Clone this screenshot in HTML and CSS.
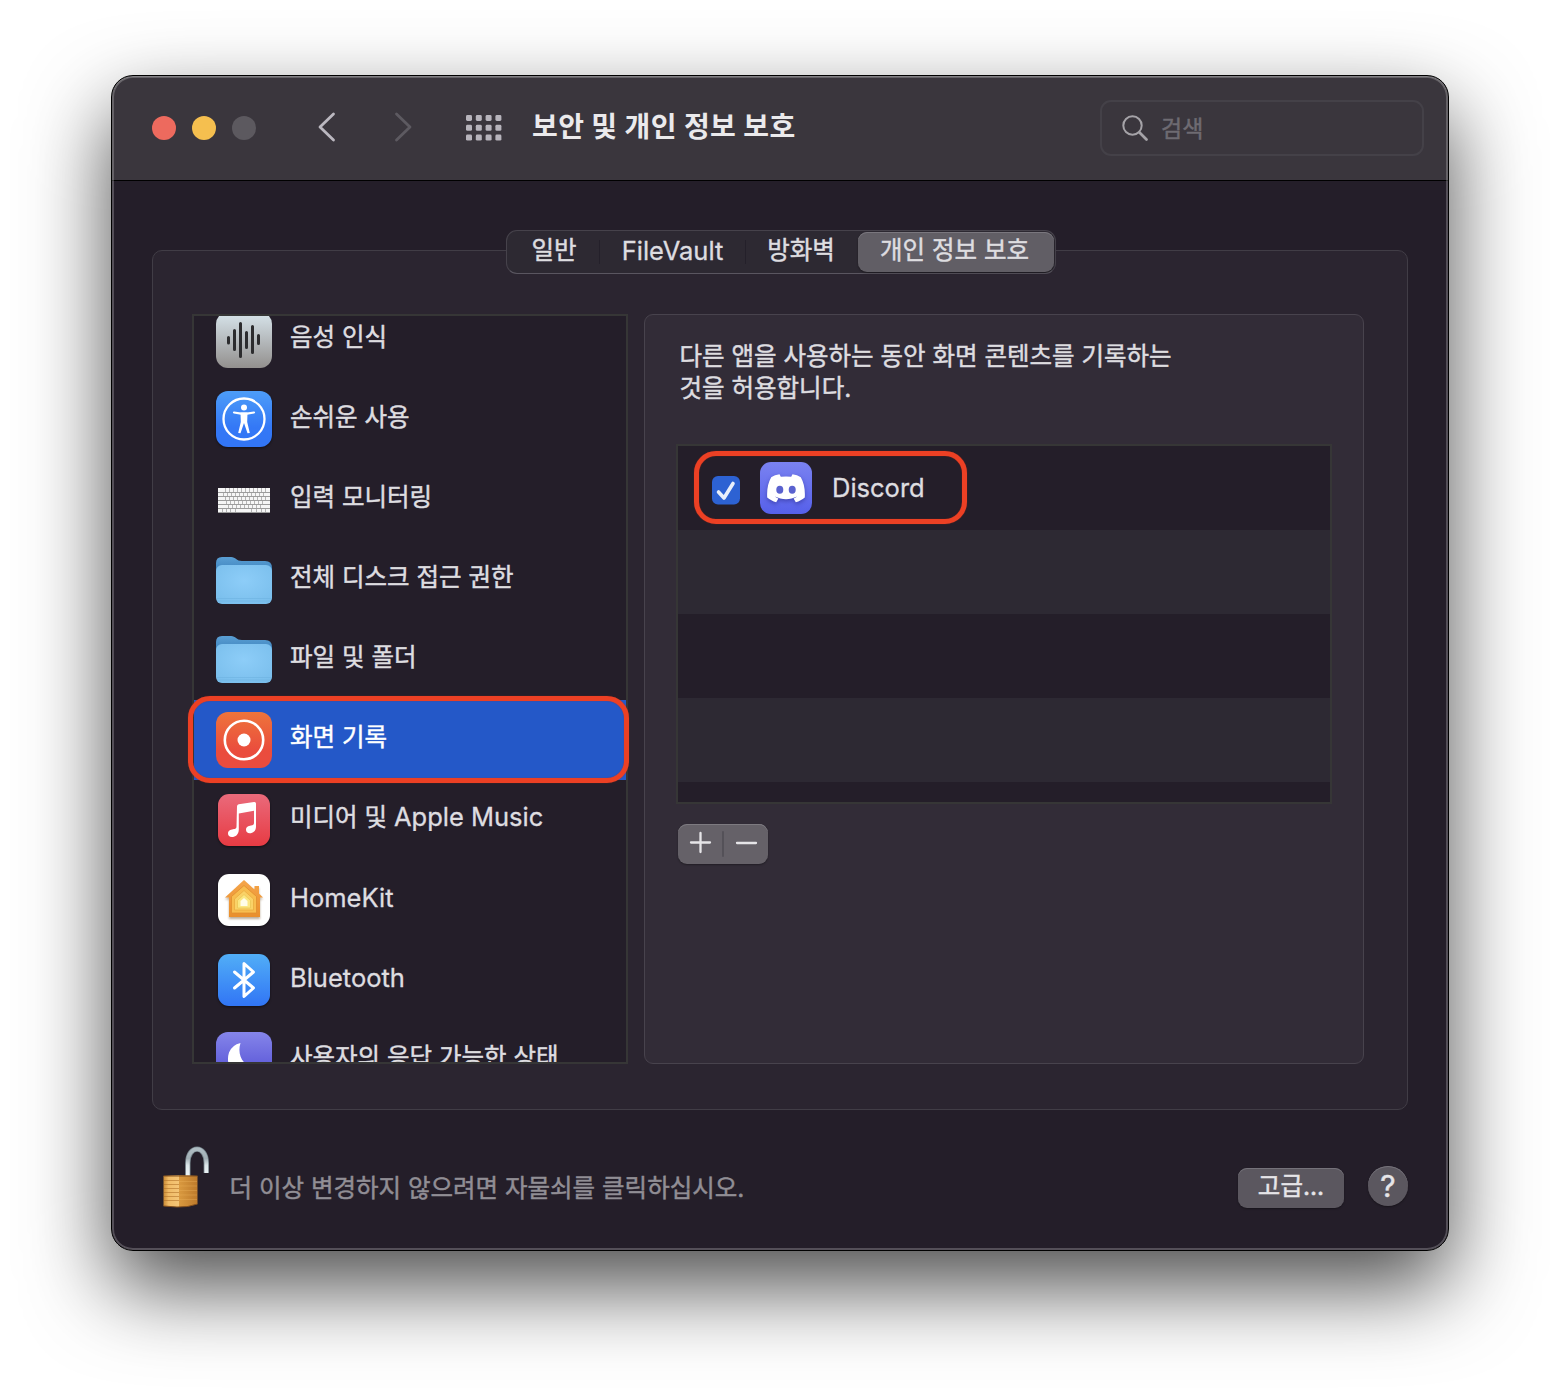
FILE: index.html
```html
<!DOCTYPE html>
<html lang="ko">
<head>
<meta charset="utf-8">
<title>보안 및 개인 정보 보호</title>
<link rel="stylesheet" href="styles.css">
</head>
<body>
<svg class="defs" width="0" height="0" aria-hidden="true">
  <defs>
    <linearGradient id="gray" x2="0" y2="1"><stop stop-color="#d8e5ec"/><stop offset="1" stop-color="#93908e"/></linearGradient>
    <linearGradient id="blue" x2="0" y2="1"><stop stop-color="#4d9df8"/><stop offset=".65" stop-color="#3478f6"/><stop offset="1" stop-color="#3275f5"/></linearGradient>
    <linearGradient id="bt" x2="0" y2="1"><stop stop-color="#51aef7"/><stop offset="1" stop-color="#3175f5"/></linearGradient>
    <linearGradient id="orange" x2="0" y2="1"><stop stop-color="#ee743b"/><stop offset=".7" stop-color="#ea4c3d"/><stop offset="1" stop-color="#ea4c3f"/></linearGradient>
    <linearGradient id="pink" x2="0" y2="1"><stop stop-color="#ea6a7b"/><stop offset="1" stop-color="#e73b43"/></linearGradient>
    <linearGradient id="purple" x2="0" y2="1"><stop stop-color="#8585ea"/><stop offset="1" stop-color="#4a45cf"/></linearGradient>
    <linearGradient id="discord" x2="0" y2="1"><stop stop-color="#7a82f1"/><stop offset="1" stop-color="#5660ea"/></linearGradient>
    <linearGradient id="back" x2="0" y2="1"><stop stop-color="#5a9fd4"/><stop offset=".4" stop-color="#4489c2"/></linearGradient>
    <radialGradient id="front" cy=".4" r=".75"><stop stop-color="#8dcdf8"/><stop offset="1" stop-color="#78bdeb"/></radialGradient>
    <linearGradient id="house" x2="0" y2="1"><stop stop-color="#f5a54a"/><stop offset="1" stop-color="#e98f2c"/></linearGradient>
    <linearGradient id="brass"><stop stop-color="#c98a35"/><stop offset=".15" stop-color="#f0bb66"/><stop offset=".45" stop-color="#f4c577"/><stop offset=".46" stop-color="#d9993f"/><stop offset="1" stop-color="#bd7a2b"/></linearGradient>
    <linearGradient id="steel" x2="0" y2="1"><stop stop-color="#aebcc2"/><stop offset=".35" stop-color="#a3b0b6"/><stop offset=".6" stop-color="#dde7ea"/><stop offset="1" stop-color="#eef5f7"/></linearGradient>
    <symbol id="folder" viewBox="0 0 56 48">
      <path d="M0 7Q0 1 6 1H15C20 1 20 5 26 5H49Q56 5 56 12V30H0Z" fill="url(#back)"/>
      <rect y="9" width="56" height="39" rx="6" fill="url(#front)"/>
      <path d="M1 42.5H55M1 45H55" stroke="#70b4e2" stroke-width=".7"/>
    </symbol>
  </defs>
</svg>
<main class="window">
  <header class="toolbar">
    <div class="lights"><i class="light close"></i><i class="light minimize"></i><i class="light disabled"></i></div>
    <svg class="back" width="20" height="32" viewBox="0 0 20 32"><path d="M16.5 3L3 16L16.5 29" class="chevron"/></svg>
    <svg class="forward" width="20" height="32" viewBox="0 0 20 32"><path d="M3.5 3L17 16L3.5 29" class="chevron dim"/></svg>
    <svg class="apps" width="36" height="26" viewBox="0 0 36 26" fill="#b7b4bc">
      <g id="dots"><rect width="6" height="6" rx="1.4"/><rect x="9.8" width="6" height="6" rx="1.4"/><rect x="19.6" width="6" height="6" rx="1.4"/><rect x="29.4" width="6" height="6" rx="1.4"/></g>
      <use href="#dots" y="9.8"/><use href="#dots" y="19.6"/>
    </svg>
    <h1 class="title">보안 및 개인 정보 보호</h1>
    <div class="search">
      <svg width="28" height="28" viewBox="0 0 28 28" fill="none" stroke="#a5a3a8"><circle cx="11.5" cy="11.5" r="9.2" stroke-width="2"/><path d="M18.5 18.5L25.5 25.5" stroke-width="2.8" stroke-linecap="round"/></svg>
      <span>검색</span>
    </div>
  </header>

  <nav class="tabs">
    <span class="tab general">일반</span><i class="divider"></i>
    <span class="tab vault latin">FileVault</span><i class="divider"></i>
    <span class="tab firewall">방화벽</span>
    <span class="tab active">개인 정보 보호</span>
  </nav>

  <section class="group">
    <div class="sidebar">
      <ul class="list">
        <li class="item"><svg class="icon" viewBox="0 0 56 56"><rect width="56" height="56" rx="12" fill="url(#gray)"/><path d="M12.5 25.500V31M18.500 18.500V37.500M24.500 11.500V44.500M30.500 20.500V35.500M36.500 14.500V40.500M42.500 23.500V31.500" stroke="#2c2c2e" stroke-width="3" stroke-linecap="round"/></svg><span>음성 인식</span></li>
        <li class="item"><svg class="icon raised lifted" viewBox="0 0 56 56"><rect width="56" height="56" rx="12" fill="url(#blue)"/><circle cx="28" cy="28" r="20.500" fill="none" stroke="#fff" stroke-width="2.300"/><circle cx="28" cy="16.500" r="3"/><path d="M18 21.500L25 22.600H31L38 21.500" class="limb"/><path d="M24.500 21.500H31.500L31.200 31L33.800 42L31.500 42.300L28 32L24.500 42.300L22.200 42L24.800 31Z" fill="#fff"/></svg><span>손쉬운 사용</span></li>
        <li class="item"><svg class="icon" viewBox="0 0 56 56"><path d="M2 16H54V41H2Z" fill="#f6f6f6"/><path d="M2 20.500H54M2 24.500H54M2 28.500H54M2 32.500H54M2 36.500H54M2 40.500H54" stroke="#9c9c9c"/><path d="M9.500 16V20M13.500 16V20M17.500 16V20M21.500 16V20M25.500 16V20M29.500 16V20M33.500 16V20M37.500 16V20M41.500 16V20M45.500 16V20M49.500 16V20M7.500 21V24M11.500 21V24M15.500 21V24M19.500 21V24M23.500 21V24M27.500 21V24M31.500 21V24M35.500 21V24M39.500 21V24M43.500 21V24M47.500 21V24M9.500 25V28M13.500 25V28M17.500 25V28M21.500 25V28M25.500 25V28M29.500 25V28M33.500 25V28M37.500 25V28M41.500 25V28M45.500 25V28M49.500 25V28M10.500 29V32M14.500 29V32M18.500 29V32M22.500 29V32M26.500 29V32M30.500 29V32M34.500 29V32M38.500 29V32M42.500 29V32M46.500 29V32M12.500 33V36M16.500 33V36M20.500 33V36M24.500 33V36M28.500 33V36M32.500 33V36M36.500 33V36M40.500 33V36M44.500 33V36M6.500 37V40M10.500 37V40M14.500 37V40M19.500 37V40M35.500 37V40M40.500 37V40M45.500 37V40M49.500 37V40" stroke="#b4b4b4"/></svg><span>입력 모니터링</span></li>
        <li class="item"><svg class="icon folder" viewBox="0 0 56 48"><use href="#folder"/></svg><span>전체 디스크 접근 권한</span></li>
        <li class="item"><svg class="icon folder lifted" viewBox="0 0 56 48"><use href="#folder"/></svg><span>파일 및 폴더</span></li>
        <li class="item selected"><svg class="icon" viewBox="0 0 56 56"><rect width="56" height="56" rx="12" fill="url(#orange)"/><circle cx="28" cy="28" r="19.200" fill="none" stroke="#fff" stroke-width="2.600"/><circle cx="28" cy="28" r="6.500"/></svg><span>화면 기록</span></li>
        <li class="item"><svg class="icon raised" viewBox="0 0 56 56"><rect x="2" y="2" width="52" height="52" rx="11" fill="url(#pink)"/><path d="M21 14.500Q21 12.700 22.700 12.300L38 10Q40 9.700 40 11.500V34.500C40 39 37 41.300 33.700 41.300C31.500 41.300 30 39.700 30 37.700C30 34.900 32.300 34 35 33.500C37 33.200 38 32.700 38 30.800V18.800L22.800 21.500V37.500C22.800 42.500 19.500 45 15.800 45C13.500 45 12 43.500 12 41.500C12 38.800 14.300 37.800 17 37.300C20 36.800 20.500 36.300 20.500 34Z" fill="#fff"/></svg><span>미디어 및 <b class="latin">Apple Music</b></span></li>
        <li class="item"><svg class="icon raised" viewBox="0 0 56 56"><rect x="2" y="2" width="52" height="52" rx="11" fill="#fff"/><path class="house-shadow" d="M28 8L38.500 17.500V14H43V21.500L47 25.500H44V45H13V25.500H9Z" fill="url(#house)"/><path d="M28 13.500L40.500 24.500V41H15.500V24.500Z" fill="#f8bd4f" stroke="#e08e2d" stroke-width=".8"/><path d="M28 18.500L37.500 27V38H18.500V27Z" fill="#fad267" stroke="#e9ac40" stroke-width=".8"/><path d="M28 22.500L34.500 28.500V36H21.500V28.500Z" fill="#fbe783" stroke="#ebc655" stroke-width=".8"/><path d="M28 26L31.500 29V34H24.500V29Z" fill="#fffde8"/></svg><span class="latin">HomeKit</span></li>
        <li class="item"><svg class="icon raised" viewBox="0 0 56 56"><rect x="2" y="2" width="52" height="52" rx="11" fill="url(#bt)"/><path d="M18.500 20L37.500 36L28 44.500V11.500L37.500 20L18.500 36" fill="none" stroke="#fff" stroke-width="3" stroke-linecap="round" stroke-linejoin="round"/></svg><span class="latin">Bluetooth</span></li>
        <li class="item"><svg class="icon" viewBox="0 0 56 56"><rect width="56" height="56" rx="12" fill="url(#purple)"/><path d="M24.500 11Q16 13 13 20.500C9 33 17 43 28 43C34 43 40 40 43 34C30 38 20 25 24.500 11Z" fill="#fff"/></svg><span>사용자의 응답 가능한 상태</span></li>
      </ul>
      <i class="mark mark-row"></i>
    </div>

    <div class="panel">
      <p class="description">다른 앱을 사용하는 동안 화면 콘텐츠를 기록하는<br>것을 허용합니다.</p>
      <div class="table">
        <div class="app">
          <svg class="check" width="28" height="29" viewBox="0 0 28 29"><rect width="28" height="28.500" rx="6" fill="#2d62d3"/><path d="M6.500 16L12 22L21 7.500" fill="none" stroke="#e9effb" stroke-width="3.600" stroke-linecap="round" stroke-linejoin="round"/></svg>
          <svg class="app-icon" width="52" height="52" viewBox="0 0 52 52"><rect width="52" height="52" rx="11" fill="url(#discord)"/><path class="face" d="M19.500 12.300C16.500 12.800 13.500 13.700 11.200 15.300C8.100 20.500 6.700 27.500 7.200 35.500C9.800 37.800 12.800 39.300 16.200 40.200L18.400 36.600C16.800 36 15.800 35.400 14.800 34.600C22 38 30 38 37.200 34.600C36.200 35.400 35.200 36 33.600 36.600L35.800 40.200C39.200 39.300 42.200 37.800 44.800 35.500C45.300 27.500 43.900 20.500 40.800 15.300C38.500 13.700 35.500 12.800 32.500 12.300L31.200 14.800Q26 14 20.800 14.800Z" fill="#fff"/><ellipse cx="19.800" cy="27.700" rx="3.500" ry="4" fill="#5a62cf"/><ellipse cx="32.200" cy="27.700" rx="3.500" ry="4" fill="#5a62cf"/></svg>
          <span class="app-name latin">Discord</span>
          <i class="mark mark-app"></i>
        </div>
      </div>
      <div class="stepper">
        <svg width="90" height="40" viewBox="0 0 90 40" fill="none" stroke="#e6e5e8" stroke-width="2.300" stroke-linecap="round"><path d="M13 18.500H32M22.500 9V28M59 19H78"/><path d="M45 8V32" stroke="#545158" stroke-width="2"/></svg>
      </div>
    </div>
  </section>

  <footer class="footer">
    <svg class="lock" width="48" height="62" viewBox="0 0 48 62">
      <path d="M24.800 30V17C24.800 -1.500 43.300 -1.500 43.300 17V27" fill="none" stroke="#75838a" stroke-width="5.400"/>
      <path d="M24.800 30V17C24.800 -1.500 43.300 -1.500 43.300 17V27" fill="none" stroke="url(#steel)" stroke-width="3.800"/>
      <path d="M.5 30Q18 28.500 34.500 30V58Q25 61.500 14 61L.5 60Z" fill="url(#brass)"/>
      <path d="M1 34.500H16M1 38.500H16M1 42.500H16M1 46.500H16M1 50.500H16M1 54.500H16" stroke="#ad6c24" stroke-width="1.200" opacity=".55"/>
      <path d="M16 35.500H34M16 40H34M16 44.500H34M16 49H34M16 53.500H34" stroke="#eeb45d" opacity=".35"/>
      <path d="M.5 30H34.500M.5 60L14 61Q25 61.500 34.500 58" stroke="#84501d" fill="none"/>
    </svg>
    <span class="hint">더 이상 변경하지 않으려면 자물쇠를 클릭하십시오.</span>
    <span class="advanced">고급...</span>
    <span class="help">?</span>
  </footer>
</main>
</body>
</html>
```
FILE: styles.css
```css
* { box-sizing: border-box; }

body {
  margin: 0;
  width: 1560px;
  height: 1398px;
  padding: 75px 111px;
  overflow: hidden;
  background: #fff;
  color: #dedde0;
  font: 24.5px/32px Inter, "Noto Sans CJK KR", sans-serif;
  -webkit-text-stroke: .45px;
  white-space: nowrap;
}

.defs { position: absolute; }
svg { display: block; flex: none; }

/* Latin labels are set slightly larger than the Hangul ones */
.latin { font-size: 25.5px; font-weight: 400; -webkit-text-stroke-width: .3px; }

.window {
  display: flex;
  flex-direction: column;
  width: 1338px;
  height: 1176px;
  border: 1px solid #000;
  border-radius: 22px;
  background: linear-gradient(#3a363d 0 104px, #000 104px 105px, #241e29 105px);
  box-shadow:
    inset 0 1px rgba(255, 255, 255, .2),
    inset 0 0 0 2px rgba(255, 255, 255, .22),
    0 36px 84px rgba(0, 0, 0, .7);
}

/* Toolbar */
.toolbar {
  display: flex;
  align-items: center;
  height: 104px;
  padding: 0 24px 0 40px;
}
.lights { display: flex; gap: 16px; }
.light { width: 24px; height: 24px; border-radius: 50%; }
.close { background: #ed6a5e; }
.minimize { background: #f5bf4f; }
.disabled { background: #5c595f; }
.chevron {
  fill: none;
  stroke: #bbb8c0;
  stroke-width: 2.8;
  stroke-linecap: round;
  stroke-linejoin: round;
}
.dim { stroke: #5d5a61; }
.back { margin: -3px 0 0 61px; }
.forward { margin: -3px 0 0 56px; }
.apps { margin: -1px 0 0 53px; }
.title {
  margin: -2px auto 0 30px;
  color: #ebeaec;
  font-size: 28px;
  font-weight: 700;
  letter-spacing: .4px;
  -webkit-text-stroke-width: 0;
}
.search {
  display: flex;
  align-items: center;
  gap: 12px;
  width: 324px;
  height: 56px;
  padding-left: 19px;
  border: 2px solid #444148;
  border-radius: 11px;
  color: #6e6b72;
  font-size: 23px;
}
.search span { margin-top: 1px; }

/* Tabs */
.tabs {
  position: relative;
  z-index: 1;
  display: flex;
  align-items: center;
  align-self: center;
  width: 550px;
  height: 44px;
  margin: 50px 0 -24px 2px;
  border: 1px solid #46424b;
  border-bottom-color: #5a5660;
  border-radius: 11px;
  background: #2d2932;
}
.tab { height: 40px; line-height: 36px; text-align: center; }
.general { width: 92px; padding-left: 2px; }
.vault { width: 145px; line-height: 38px; }
.firewall { width: 112px; padding-right: 2px; }
.active {
  width: 196px;
  padding-right: 3px;
  border-radius: 9px;
  background: #615e65;
  box-shadow: inset 0 1px #7a777e, 0 1px 2px rgba(0, 0, 0, .4);
}
.divider { width: 1px; height: 24px; background: #24202a; }

/* Group box */
.group {
  display: grid;
  grid-template-columns: 436px 720px;
  gap: 16px;
  height: 860px;
  margin: 0 40px;
  padding: 63px 0 0 39px;
  border: 1px solid #413d46;
  border-radius: 10px;
  background: #2b2530;
}
.sidebar {
  position: relative;
  height: 750px;
  border: 2px solid #363636;
  background: #241e29;
}
.list {
  height: 746px;
  margin: 0;
  padding: 0;
  overflow: hidden;
  list-style: none;
}
.item {
  display: flex;
  align-items: center;
  gap: 18px;
  height: 80px;
  padding-left: 22px;
}
.item:first-child { margin-top: -16px; }
.item > span { margin-top: -7px; }
.item > .latin { margin-top: -5px; }
.selected { background: #2458c8; color: #fff; }
.icon { width: 56px; height: 56px; fill: #fff; }
.icon.folder { height: 48px; }
.icon.lifted { margin-top: -2px; }
.raised { filter: drop-shadow(0 1px 1px rgba(0, 0, 0, .5)); }
.limb { fill: none; stroke: #fff; stroke-width: 2.2; stroke-linecap: round; }
.house-shadow { filter: drop-shadow(0 2px 1px rgba(90, 50, 0, .4)); }

/* Annotation outlines */
.mark {
  position: absolute;
  border: 5px solid #ec4024;
  border-radius: 22px;
  box-shadow: 0 0 1px #a52d1c, inset 0 0 1px #a52d1c;
}
.mark-row { inset: 380px -3px 279px -6px; }
.mark-app { left: 16px; top: 5px; width: 273px; height: 73px; }

/* Detail panel */
.panel {
  height: 750px;
  padding: 25px 31px;
  border: 1px solid #48434d;
  border-radius: 9px;
  background: #322c37;
}
.description { margin: 0 0 40px 3.5px; }
.table {
  width: 656px;
  height: 360px;
  border: 2px solid #363636;
  background: repeating-linear-gradient(#241e29 0 84px, #2d2933 84px 168px);
}
.app {
  position: relative;
  display: flex;
  align-items: center;
  height: 84px;
  padding-left: 34px;
}
.check { margin-top: 4px; }
.app-icon { margin-left: 20px; }
.face { filter: drop-shadow(0 2px 2px rgba(30, 30, 120, .45)); }
.app-name { margin: -1px 0 0 20px; }
.stepper {
  width: 90px;
  height: 40px;
  margin: 20px 0 0 2px;
  border-radius: 9px;
  background: #656168;
  box-shadow: inset 0 1px #7d7a80, 0 1px 2px rgba(0, 0, 0, .35);
}

/* Footer */
.footer {
  display: flex;
  align-items: flex-start;
  padding: 36px 40px 0 51px;
}
.hint { margin: 26px auto 0 18.5px; color: #918e95; }
.advanced, .help {
  height: 40px;
  background: #5b575f;
  color: #e6e5e8;
  text-align: center;
  box-shadow: inset 0 1px #75727a, 0 1px 2px rgba(0, 0, 0, .35);
}
.advanced { width: 106px; margin: 22px 24px 0 0; border-radius: 9px; line-height: 36px; }
.help { width: 40px; margin-top: 20px; border-radius: 50%; font-size: 30px; line-height: 41px; }
```
